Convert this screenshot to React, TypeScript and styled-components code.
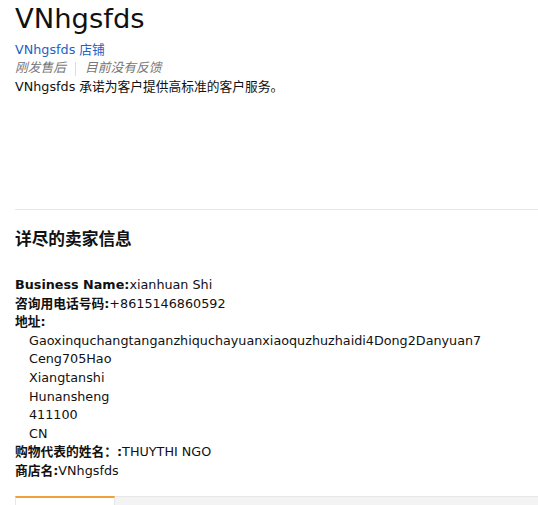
import React from 'react';
import styled, { createGlobalStyle } from 'styled-components';

const GlobalStyle = createGlobalStyle`
  html, body {
    margin: 0;
    padding: 0;
    background: #fff;
  }
  body {
    font-family: "DejaVu Sans", "Noto Sans CJK SC", sans-serif;
    font-size: 12.75px;
    line-height: 18.6px;
    color: #111;
  }
`;

const Page = styled.div`
  width: 538px;
  height: 505px;
  overflow: hidden;
  padding-left: 15px;
  box-sizing: border-box;
`;

const Title = styled.h1`
  margin: 0;
  font-size: 27.4px;
  line-height: 38px;
  font-weight: 400;
  color: #111;
`;

const StoreLink = styled.a`
  display: block;
  margin-top: 2.7px;
  color: #2162c5;
  text-decoration: none;
`;

const Feedback = styled.div`
  display: flex;
  align-items: center;
  font-style: italic;
  color: #767676;
`;

const Divider = styled.span`
  width: 1px;
  height: 14px;
  background: #ddd;
  margin: 0 9px;
`;

const Blurb = styled.div`
  height: 131.4px;
`;

const Rule = styled.hr`
  margin: 0;
  border: 0;
  border-top: 1px solid #e7e7e7;
`;

const Heading = styled.h3`
  margin: 17px 0 0;
  font-size: 16.7px;
  line-height: 24px;
  font-weight: 700;
`;

const InfoList = styled.div`
  margin-top: 24.7px;
`;

const Row = styled.div<{ $indent?: boolean }>`
  padding-left: ${(p) => (p.$indent ? '14px' : '0')};
`;

const Label = styled.span`
  font-weight: 700;
`;

const Tabs = styled.div`
  display: flex;
  margin-top: 15.7px;
  height: 20px;
  background: #f3f3f3;
  border-top: 1px solid #e7e7e7;
`;

const Tab = styled.div<{ $active?: boolean }>`
  width: 100px;
  margin-top: -1px;
  background: ${(p) => (p.$active ? '#fff' : 'transparent')};
  border-top: 2px solid ${(p) => (p.$active ? '#f0a13b' : 'transparent')};
  border-left: 1px solid #e7e7e7;
  border-right: 1px solid #e7e7e7;
  box-sizing: border-box;
`;

const address = [
  'Gaoxinquchangtanganzhiquchayuanxiaoquzhuzhaidi4Dong2Danyuan7',
  'Ceng705Hao',
  'Xiangtanshi',
  'Hunansheng',
  '411100',
  'CN',
];

export default function App() {
  return (
    <>
      <GlobalStyle />
      <Page>
        <Title>VNhgsfds</Title>
        <StoreLink href="#">VNhgsfds 店铺</StoreLink>
        <Feedback>
          刚发售后<Divider />目前没有反馈
        </Feedback>
        <Blurb>VNhgsfds 承诺为客户提供高标准的客户服务。</Blurb>
        <Rule />
        <Heading>详尽的卖家信息</Heading>
        <InfoList>
          <Row>
            <Label>Business Name:</Label>xianhuan Shi
          </Row>
          <Row>
            <Label>咨询用电话号码:</Label>+8615146860592
          </Row>
          <Row>
            <Label>地址:</Label>
          </Row>
          {address.map((line) => (
            <Row $indent key={line}>
              {line}
            </Row>
          ))}
          <Row>
            <Label>购物代表的姓名：:</Label>THUYTHI NGO
          </Row>
          <Row>
            <Label>商店名:</Label>VNhgsfds
          </Row>
        </InfoList>
        <Tabs>
          <Tab $active />
        </Tabs>
      </Page>
    </>
  );
}
